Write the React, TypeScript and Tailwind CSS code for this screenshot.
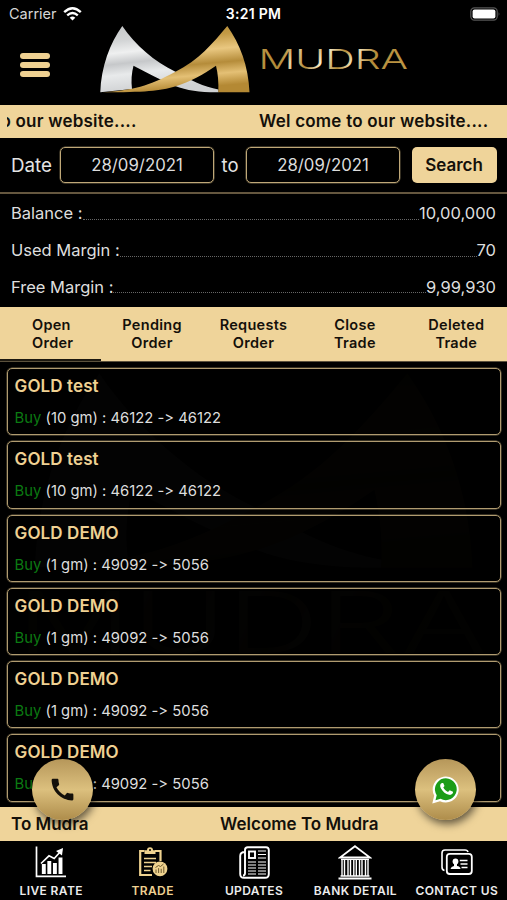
import React from "react";
import { MdCall } from "react-icons/md";

const trades = [
  { name: "GOLD test", qty: "10 gm", open: "46122", current: "46122" },
  { name: "GOLD test", qty: "10 gm", open: "46122", current: "46122" },
  { name: "GOLD DEMO", qty: "1 gm", open: "49092", current: "5056" },
  { name: "GOLD DEMO", qty: "1 gm", open: "49092", current: "5056" },
  { name: "GOLD DEMO", qty: "1 gm", open: "49092", current: "5056" },
  { name: "GOLD DEMO", qty: "1 gm", open: "49092", current: "5056" },
];

const balances = [
  { label: "Balance :", value: "10,00,000" },
  { label: "Used Margin :", value: "70" },
  { label: "Free Margin :", value: "9,99,930" },
];

const tabs = [
  ["Open", "Order"],
  ["Pending", "Order"],
  ["Requests", "Order"],
  ["Close", "Trade"],
  ["Deleted", "Trade"],
];

const StatusBar = () => (
  <div className="relative flex h-7 items-center justify-between pr-[6px] pl-[9px]">
    <div className="flex items-center gap-[6px]">
      <span className="text-[14.5px] text-[#d6d6d6]">Carrier</span>
      <svg width="19" height="14" viewBox="0 0 19 14" fill="none" stroke="#fff">
        <path d="M1.2 5.2 Q9.5 -2.6 17.8 5.2" strokeWidth="2.4" />
        <path d="M4.2 8.4 Q9.5 3.6 14.8 8.4" strokeWidth="2.3" />
        <path d="M6.7 10.8 Q9.5 8.2 12.3 10.8 L9.5 13.6Z" fill="#fff" stroke="none" />
      </svg>
    </div>
    <span className="absolute inset-x-0 top-[3px] text-center text-[14px] font-semibold tracking-[0.3px] text-white">
      3:21 PM
    </span>
    <svg width="31" height="14" viewBox="0 0 31 14">
      <rect x="0.8" y="0.8" width="26.4" height="12.4" rx="3.6" fill="none" stroke="#565656" strokeWidth="1.2" />
      <rect x="2.6" y="2.4" width="22.8" height="9.2" rx="2" fill="#fff" />
      <path d="M28.6 5 Q30.4 7 28.6 9Z" fill="#565656" />
    </svg>
  </div>
);

const LogoMark = ({ className }: { className?: string }) => (
  <svg className={className} viewBox="100 25 150 68">
    <defs>
      <linearGradient id="silver" x1="0" y1="0" x2="0.2" y2="1">
        <stop offset="0" stopColor="#c4c6c7" />
        <stop offset="0.25" stopColor="#d3d5d6" />
        <stop offset="0.42" stopColor="#eff0f0" />
        <stop offset="0.58" stopColor="#c6c8ca" />
        <stop offset="0.74" stopColor="#e8eaeb" />
        <stop offset="1" stopColor="#cfd1d3" />
      </linearGradient>
      <linearGradient id="gold" x1="0.1" y1="0" x2="0.3" y2="1">
        <stop offset="0" stopColor="#b08a35" />
        <stop offset="0.25" stopColor="#c39a45" />
        <stop offset="0.46" stopColor="#e9c780" />
        <stop offset="0.66" stopColor="#b58c3a" />
        <stop offset="0.82" stopColor="#e4c075" />
        <stop offset="1" stopColor="#b48934" />
      </linearGradient>
    </defs>
    <path
      d="M122.3 26 C135 45 155 62 175 71.5 C190 80 204 87 218.5 89.5 V92.3 C201 92.5 187 90.5 175 86 C160 80 146 72 133.5 65.8 Q130.5 77 132 89 L100.3 92.3 C101 67 110 43 122.3 26Z"
      fill="url(#silver)"
    />
    <path
      d="M227.3 26 C240 44 248.5 66 249.5 92.3 H218.3 Q219 78 216 65.8 C203 75 189 82.5 175 86.5 C160 91 145 92.3 102 92.3 C133 90.5 149 86 175 72 C199 60 213 43 227.3 26Z"
      fill="url(#gold)"
    />
  </svg>
);

const Wordmark = ({ className }: { className?: string }) => (
  <svg className={`overflow-visible ${className}`} viewBox="0 0 150 26">
    <defs>
      <linearGradient id="word" x1="0" y1="0" x2="1" y2="0.1">
        <stop offset="0" stopColor="#bd9644" />
        <stop offset="0.2" stopColor="#b08a37" />
        <stop offset="0.27" stopColor="#e8d4a3" />
        <stop offset="0.38" stopColor="#b08a37" />
        <stop offset="0.48" stopColor="#fbf0d2" />
        <stop offset="0.6" stopColor="#b08a37" />
        <stop offset="0.68" stopColor="#f5e5bd" />
        <stop offset="0.8" stopColor="#b38c3a" />
        <stop offset="1" stopColor="#bd9644" />
      </linearGradient>
    </defs>
    <text
      x="-0.5"
      y="22.5"
      textLength="149.5"
      lengthAdjust="spacingAndGlyphs"
      fontSize="27"
      fontWeight="300"
      fill="url(#word)"
      className="font-['Inter']"
    >
      MUDRA
    </text>
  </svg>
);

const LiveRateIcon = () => (
  <svg width="32" height="32" viewBox="0 0 32 32" fill="none" stroke="#fff">
    <path d="M1.5 0.5 V30.3 H31" strokeWidth="1.7" />
    <path d="M8.8 18 V28 M14.3 15 V28 M19.9 17 V28 M25.5 11.5 V28" strokeWidth="3.9" />
    <path d="M6 17.5 L14 9.8 L19.2 12.5 L25.5 5.5" strokeWidth="1.6" />
    <path d="M21 5 L28 2 L27 9.5Z" fill="#fff" stroke="none" />
  </svg>
);

const TradeIcon = () => (
  <svg width="30" height="30" viewBox="0 0 30 30" fill="none" stroke="#efd28f">
    <path d="M6.5 4 H2.2 V28 H14 M17 4 H22.5 V14" strokeWidth="2.2" />
    <path d="M6.5 7 V3.2 H9 Q9 0.2 12 0.2 Q15 0.2 15 3.2 H17.5 V7Z" fill="#efd28f" stroke="none" />
    <circle cx="12" cy="3" r="1" fill="#000" stroke="none" />
    <path d="M6 11.5 H18 M6 15.5 H18 M6 19.5 H14 M6 23.5 H12.5" strokeWidth="1.6" />
    <circle cx="22" cy="21.8" r="7.4" fill="#efd28f" stroke="none" />
    <path
      d="M18 26 V22.5 M20.6 26 V21.2 M23.2 26 V21.8 M25.8 26 V19.5 M17.5 20.5 L20.5 18.5 L22.5 19.5 L25.5 17"
      stroke="#5e4c24"
      strokeWidth="0.9"
    />
  </svg>
);

const UpdatesIcon = () => (
  <svg width="31" height="33" viewBox="0 0 31 33" fill="none" stroke="#fff">
    <path
      d="M6 6 Q1.2 6 1.2 10 V28 Q1.2 31.8 5 31.8 H26 Q29.8 31.8 29.8 28 V4 Q29.8 1.2 27 1.2 H8.8 Q6 1.2 6 4 V27 Q6 29.5 4 29.5"
      strokeWidth="1.9"
    />
    <rect x="10" y="5.5" width="6" height="6.5" strokeWidth="1.9" />
    <path
      d="M19 5 H27 M19 8.5 H27 M19 12 H27 M9 16 H17 M19 16 H27 M9 19 H17 M19 19 H27 M9 22 H17 M19 22 H27 M9 25 H17 M19 25 H27 M9 28 H17 M19 28 H27"
      strokeWidth="1.2"
    />
  </svg>
);

const BankIcon = () => (
  <svg width="34" height="35" viewBox="0 0 34 35" fill="none" stroke="#fff">
    <path d="M17 1.2 L32 12.5 H2Z" strokeWidth="1.8" />
    <path d="M3 14.3 H31 M2.5 31 H31.5" strokeWidth="1.3" />
    <path
      d="M4 15 V31 M6.5 15 V31 M10 15 V31 M12.5 15 V31 M15.8 15 V31 M18.3 15 V31 M21.5 15 V31 M24 15 V31 M27.5 15 V31 M30 15 V31"
      strokeWidth="1.4"
    />
    <path d="M0.5 33.5 H33.5" strokeWidth="1.9" />
  </svg>
);

const ContactIcon = () => (
  <svg width="32" height="26" viewBox="0 0 32 26" fill="none" stroke="#fff">
    <path d="M3.5 21.5 Q1 21 1 18 V4 Q1 1 4 1 H24 Q26.5 1 27 3" strokeWidth="1.6" />
    <rect x="5.8" y="4.8" width="25" height="20.2" rx="3" strokeWidth="1.8" />
    <circle cx="14.5" cy="12.4" r="2.9" fill="#fff" stroke="none" />
    <path d="M9.5 20 Q10 17.3 13 17 V14.5 H16 V17 Q19.3 17.3 19.5 20Z" fill="#fff" stroke="none" />
    <path d="M18.8 11.5 H26.5 M19.5 15 H26.5 M20.5 18.5 H26.5" strokeWidth="1.6" />
  </svg>
);

const WhatsAppIcon = () => (
  <svg width="28" height="29" viewBox="0 0 28 29">
    <path d="M0.3 28.5 L2.2 20.6 A13 13 0 1 1 8 26.2Z" fill="#fff" />
    <path d="M3.5 25.2 L4.7 20.2 A10.9 10.9 0 1 1 8.6 23.8Z" fill="#1c9c18" />
    <path
      d="M10 8 C8 8.8 7.6 11 9 13.5 C11 17 13.5 19 17 19.8 C19.5 20.3 21.5 18.5 21 16.8 L17.7 15.2 L16 17 C13.7 16 12.2 14.5 11.3 12.6 L12.5 11 L11.2 8Z"
      fill="#fff"
    />
  </svg>
);

const navItems = [
  { label: "LIVE RATE", icon: <LiveRateIcon /> },
  { label: "TRADE", icon: <TradeIcon />, active: true },
  { label: "UPDATES", icon: <UpdatesIcon /> },
  { label: "BANK DETAIL", icon: <BankIcon /> },
  { label: "CONTACT US", icon: <ContactIcon /> },
];

const DateBox = ({ value }: { value: string }) => (
  <div className="flex h-9 w-[154px] items-center justify-center rounded-[5px] border border-[#bfa878] pt-[2px] text-[16.8px] text-[#dcdcdc] shadow-[0_0_0_0.5px_#6d6044]">
    {value}
  </div>
);

export default function App() {
  return (
    <div className="relative flex h-[900px] w-[507px] flex-col overflow-hidden bg-black font-['Inter',sans-serif]">
      <StatusBar />

      <header className="flex h-[77px] items-start pl-5">
        <div className="mt-[25px] flex w-[30px] flex-col gap-[3px]">
          <div className="h-[6px] rounded-full bg-[#efd192]" />
          <div className="h-[6px] rounded-full bg-[#efd192]" />
          <div className="h-[6px] rounded-full bg-[#efd192]" />
        </div>
        <LogoMark className="-mt-[3px] ml-[50px] h-[68px] w-[150px]" />
        <Wordmark className="mt-[18px] ml-[9px] h-[26px] w-[150px]" />
      </header>

      <div className="flex h-[33px] shrink-0 items-center bg-[#efd49a] pl-[7px] text-[17px] font-semibold tracking-[0.22px] text-[#14100a]">
        <div className="flex w-[252px] overflow-hidden">
          <span className="-ml-[6.6px] whitespace-nowrap">o our website....</span>
        </div>
        <span className="whitespace-nowrap">Wel come to our website....</span>
      </div>

      <div className="flex h-14 shrink-0 items-center border-b-2 border-[#65573f] pl-[11px]">
        <span className="w-[49px] pt-[2px] text-[18.8px] text-[#e4e4e4]">Date</span>
        <DateBox value="28/09/2021" />
        <span className="w-8 pt-[2px] text-center text-[18.5px] text-[#e4e4e4]">to</span>
        <DateBox value="28/09/2021" />
        <button className="ml-3 h-9 w-[85px] rounded-[5px] bg-[#efd49a] pt-[1px] pr-[1px] text-[17px] font-semibold text-[#14100a]">
          Search
        </button>
      </div>

      <div className="flex h-[113px] shrink-0 flex-col pt-[1.4px]">
        {balances.map((row) => (
          <div
            key={row.label}
            className="flex h-[36.6px] items-center px-[11px] text-[16.5px] text-[#dedede]">
            <span>{row.label}</span>
            <div className="mt-[12px] flex-1 border-b border-dotted border-[#666]" />
            <span>{row.value}</span>
          </div>
        ))}
      </div>

      <div className="grid h-[55px] shrink-0 grid-cols-5 border-b border-[#5b513c] bg-[#efd49a]">
        {tabs.map(([top, bottom], i) => (
          <div
            key={i}
            className={`flex justify-center pt-[9.4px] text-[14.5px] leading-[17.5px] font-semibold tracking-[0.3px] text-[#14100a] ${
              i === 0 ? "border-b-2 border-[#1c1810] pl-[4px] text-left" : "text-center"
            }`}>
            <div>
              <div>{top}</div>
              <div>{bottom}</div>
            </div>
          </div>
        ))}
      </div>

      <main className="relative flex h-[445px] shrink-0 flex-col gap-[6px] pt-[6px] pr-[6px] pl-[7px]">
        {/* faint brand watermark behind the list */}
        <div
          aria-hidden
          className="absolute inset-x-0 top-2 flex flex-col items-center opacity-[0.012]">
          <LogoMark className="h-[200px] w-[440px]" />
          <Wordmark className="mt-3 h-[82px] w-[474px]" />
        </div>
        {trades.map((trade, i) => (
          <div
            key={i}
            className="flex h-[67.3px] shrink-0 flex-col rounded-[5px] border border-[#b09b70] px-[6.6px] pt-[6px] shadow-[0_0_0_0.5px_#6d6044]">
            <span className="text-[17px] leading-[23px] font-semibold tracking-[0.1px] text-[#efd192]">
              {trade.name}
            </span>
            <span className="mt-[10px] text-[14.8px] leading-5 text-[#dedede] [font-feature-settings:'calt'_0]">
              <span className="text-[#0b7a12]">Buy</span> ({trade.qty}) :{" "}
              {trade.open} -&gt; {trade.current}
            </span>
          </div>
        ))}
      </main>

      <div className="flex h-[34px] shrink-0 items-center bg-[#efd49a] pt-[1px] pl-[11px] text-[17px] font-semibold text-[#14100a]">
        <span className="w-[209px]">To Mudra</span>
        <span>Welcome To Mudra</span>
      </div>

      <nav className="flex h-[59px] shrink-0">
        {navItems.map((item) => (
          <div key={item.label} className="flex flex-1 flex-col items-center pl-[1px]">
            <div className="flex h-[42px] items-center justify-center">{item.icon}</div>
            <span
              className={`text-[12px] leading-4 font-semibold tracking-[0.4px] whitespace-nowrap ${
                item.active ? "text-[#efd192]" : "text-[#ececec]"
              }`}>
              {item.label}
            </span>
          </div>
        ))}
      </nav>

      <button className="absolute top-[759px] left-[32px] flex size-[61px] items-center justify-center rounded-full bg-linear-to-b from-[#b6975a] via-[#dcc07e] via-50% to-[#ae8d4b] shadow-[2px_4px_8px_rgba(0,0,0,0.6)]">
        <MdCall size={29} color="#14100a" />
      </button>
      <button className="absolute top-[759px] left-[415px] flex size-[61px] items-center justify-center rounded-full bg-linear-to-b from-[#b6975a] via-[#dcc07e] via-50% to-[#ae8d4b] shadow-[2px_4px_8px_rgba(0,0,0,0.6)]">
        <WhatsAppIcon />
      </button>
    </div>
  );
}
